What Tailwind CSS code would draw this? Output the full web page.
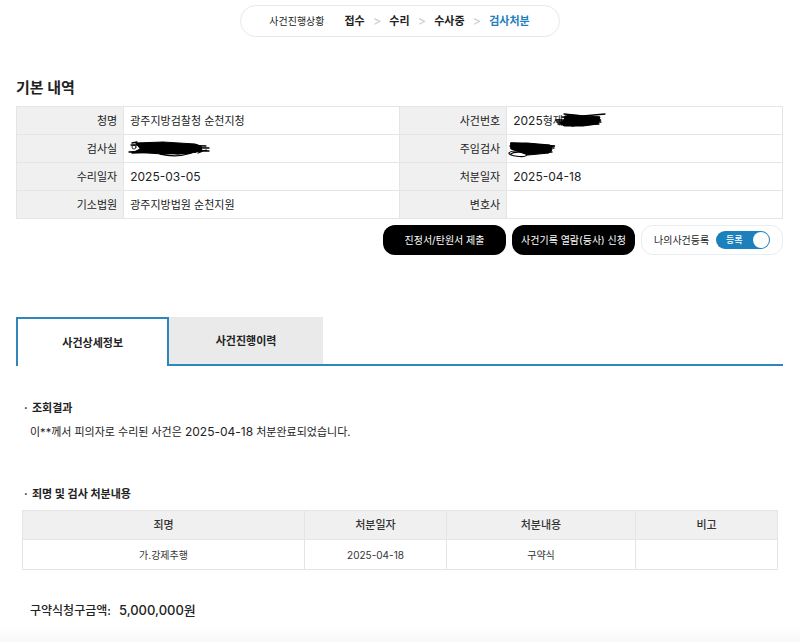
<!DOCTYPE html>
<html lang="ko">
<head>
  <meta charset="UTF-8" />
  <meta name="viewport" content="width=device-width, initial-scale=1.0"/>
  <title>사건 조회</title>
  <script src="https://cdn.jsdelivr.net/npm/@tailwindcss/browser@4"></script>
</head>
<body class="bg-white min-h-screen flex flex-col font-['Inter','Noto_Sans_CJK_KR',sans-serif] text-[11px] leading-4 text-[#222]">
  <main class="pl-4 pr-[17px] pt-[5px]">

    <!-- Progress -->
    <div class="w-80 h-8 mx-auto flex items-center justify-center border border-[#e8e8e8] rounded-2xl">
      <span class="text-[10px] mr-5">사건진행상황</span>
      <ol class="flex items-center gap-2 font-bold">
        <li>접수</li>
        <li aria-hidden="true" class="text-[13px] font-normal text-[#ccc]">&gt;</li>
        <li>수리</li>
        <li aria-hidden="true" class="text-[13px] font-normal text-[#ccc]">&gt;</li>
        <li>수사중</li>
        <li aria-hidden="true" class="text-[13px] font-normal text-[#ccc]">&gt;</li>
        <li class="text-[#1c80bd]">검사처분</li>
      </ol>
    </div>

    <!-- Basic info -->
    <h1 class="mt-[41px] mb-2 text-[15px] leading-5 font-bold">기본 내역</h1>
    <table class="w-full table-fixed border-collapse">
      <colgroup>
        <col class="w-[14%]" /><col class="w-[36%]" /><col class="w-[14%]" /><col class="w-[36%]" />
      </colgroup>
      <tbody>
        <tr class="h-7">
          <th scope="row" class="border border-[#e5e5e5] bg-[#f0f0f0] px-1.5 text-right font-normal">청명</th>
          <td class="border border-[#e5e5e5] px-1.5">광주지방검찰청 순천지청</td>
          <th scope="row" class="border border-[#e5e5e5] bg-[#f0f0f0] px-1.5 text-right font-normal">사건번호</th>
          <td class="relative border border-[#e5e5e5] px-1.5">
            <span class="text-xs">2025</span>형제
            <svg class="absolute left-12 top-1 w-14 h-5" viewBox="0 0 56 20" fill="none" stroke="#000" stroke-linecap="round" aria-hidden="true">
              <path d="M10 5L16 4L45 6L43 13L28 15L9 15L5 12L9 9Z" fill="#000"/>
              <path d="M9 3L28 5L50 3M1 9L18 9L44 6M3 13L44 13M7 6L46 9L17 15M2 11L46 11" stroke-width="1.3"/>
            </svg>
          </td>
        </tr>
        <tr class="h-7">
          <th scope="row" class="border border-[#e5e5e5] bg-[#f0f0f0] px-1.5 text-right font-normal">검사실</th>
          <td class="relative border border-[#e5e5e5] px-1.5">
            <svg class="absolute left-1 top-1 w-21 h-5" viewBox="0 0 84 20" fill="none" stroke="#000" stroke-linecap="round" aria-hidden="true">
              <path d="M8 4L35 3L67 5L73 7L74 12L60 14L34 15L6 13L12 10Z" fill="#000"/>
              <path d="M4 4L9 3M3 6L9 6M1 13L19 12L72 11M4 14L28 13L50 15L68 13M32 15Q48 19 64 14M9 5L78 7M12 8L81 9M30 10L81 12M70 14L78 11" stroke-width="1.3"/>
              <circle cx="6" cy="8" r="2" stroke-width="0.8"/>
            </svg>
          </td>
          <th scope="row" class="border border-[#e5e5e5] bg-[#f0f0f0] px-1.5 text-right font-normal">주임검사</th>
          <td class="relative border border-[#e5e5e5] px-1.5">
            <svg class="absolute left-0 top-1 w-13 h-5" viewBox="0 0 52 20" fill="none" stroke="#000" stroke-linecap="round" aria-hidden="true">
              <path d="M4 4L20 4L43 6L45 11L42 14L21 16L10 12L4 10Z" fill="#000"/>
              <path d="M4 4L48 7L29 9M3 7L47 9M16 13L45 13" stroke-width="1.4"/>
              <path d="M19 14C17 11 4 11 2 14C1 17 18 19 20 16C22 13 7 12 4 15" stroke-width="1.2"/>
            </svg>
          </td>
        </tr>
        <tr class="h-7">
          <th scope="row" class="border border-[#e5e5e5] bg-[#f0f0f0] px-1.5 text-right font-normal">수리일자</th>
          <td class="border border-[#e5e5e5] px-1.5 text-xs">2025-03-05</td>
          <th scope="row" class="border border-[#e5e5e5] bg-[#f0f0f0] px-1.5 text-right font-normal">처분일자</th>
          <td class="border border-[#e5e5e5] px-1.5 text-xs">2025-04-18</td>
        </tr>
        <tr class="h-7">
          <th scope="row" class="border border-[#e5e5e5] bg-[#f0f0f0] px-1.5 text-right font-normal">기소법원</th>
          <td class="border border-[#e5e5e5] px-1.5">광주지방법원 순천지원</td>
          <th scope="row" class="border border-[#e5e5e5] bg-[#f0f0f0] px-1.5 text-right font-normal">변호사</th>
          <td class="border border-[#e5e5e5] px-1.5"></td>
        </tr>
      </tbody>
    </table>

    <div class="mt-1.5 flex justify-end gap-1.5 text-[10px]">
      <button type="button" class="w-[123px] h-[30px] rounded-xl bg-black text-white">진정서/탄원서 제출</button>
      <button type="button" class="w-[123px] h-[30px] rounded-xl bg-black text-white whitespace-nowrap">사건기록 열람(등사) 신청</button>
      <label class="w-[142px] h-[30px] flex items-center justify-between px-3 border border-[#e8edf2] rounded-xl">
        나의사건등록
        <span class="relative flex items-center w-[54px] h-[18px] rounded-full bg-[#1c80bd] text-white">
          <input type="checkbox" checked class="absolute inset-0 w-full h-full appearance-none rounded-full" />
          <span class="pl-2.5 text-[9px] font-medium">등록</span>
          <span class="absolute right-px size-4 rounded-full bg-white"></span>
        </span>
      </label>
    </div>

    <!-- Tabs -->
    <div role="tablist" class="mt-[62px] flex h-[49px] font-bold">
      <button type="button" role="tab" aria-selected="true" class="w-1/5 border-2 border-b-0 border-[#2f86bd]">사건상세정보</button>
      <button type="button" role="tab" aria-selected="false" class="w-1/5 bg-[#eaeaea] border-b-2 border-[#2f86bd]">사건진행이력</button>
      <div class="flex-1 border-b-2 border-[#2f86bd]"></div>
    </div>

    <section class="mt-[34px] pl-2">
      <h2 class="font-bold"><span class="inline-block w-2">·</span>조회결과</h2>
      <p class="mt-2 pl-1.5">이**께서 피의자로 수리된 사건은 <span class="text-xs">2025-04-18</span> 처분완료되었습니다.</p>
    </section>

    <section class="mt-[46px] px-1.5">
      <h2 class="pl-0.5 mb-2 font-bold"><span class="inline-block w-2">·</span>죄명 및 검사 처분내용</h2>
      <table class="w-full table-fixed border-collapse text-center text-[#333]">
        <colgroup>
          <col class="w-[282px]" /><col class="w-[142px]" /><col class="w-[189px]" /><col class="w-[142px]" />
        </colgroup>
        <thead>
          <tr class="h-[29px] bg-[#f0f0f0]">
            <th scope="col" class="border border-[#e5e5e5] font-medium">죄명</th>
            <th scope="col" class="border border-[#e5e5e5] font-medium">처분일자</th>
            <th scope="col" class="border border-[#e5e5e5] font-medium">처분내용</th>
            <th scope="col" class="border border-[#e5e5e5] font-medium">비고</th>
          </tr>
        </thead>
        <tbody>
          <tr class="h-[30px] text-[10px]">
            <td class="border border-[#e5e5e5]">가.강제추행</td>
            <td class="border border-[#e5e5e5]">2025-04-18</td>
            <td class="border border-[#e5e5e5]">구약식</td>
            <td class="border border-[#e5e5e5]"></td>
          </tr>
        </tbody>
      </table>
      <p class="mt-8 pl-2 flex items-baseline gap-2 text-xs leading-4 font-medium"><span>구약식청구금액:</span><span class="text-[13px]">5,000,000원</span></p>
    </section>
  </main>
  <div class="mt-auto h-4 bg-linear-to-b from-white to-[#f8f8f8]"></div>
</body>
</html>
